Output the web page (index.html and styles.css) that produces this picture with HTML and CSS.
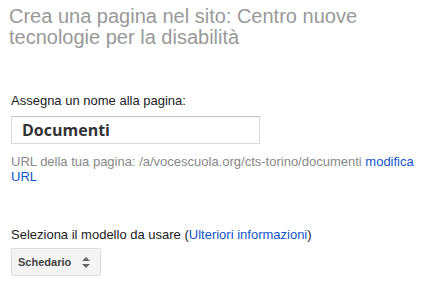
FILE: index.html
```html
<!DOCTYPE html>
<html>
<head>
<meta charset="utf-8">
<link rel="stylesheet" href="styles.css">
</head>
<body>
<div class="page">
  <h1 class="title">Crea una pagina nel sito: Centro nuove tecnologie per la disabilità</h1>
  <div class="field">
    <label class="label">Assegna un nome alla pagina:</label>
    <div class="input">Documenti</div>
    <div class="url">URL della tua pagina: /a/vocescuola.org/cts-torino/documenti <a class="link" href="#">modifica URL</a></div>
  </div>
  <div class="template">
    <div class="label">Seleziona il modello da usare (<a class="link" href="#">Ulteriori informazioni</a>)</div>
    <div class="select">
      <span>Schedario</span>
      <svg class="arrows" width="8" height="11" viewBox="0 0 8 11"><path d="M4 0 L8 4 H0 Z M0 7 H8 L4 11 Z" fill="#666"/></svg>
    </div>
  </div>
</div>
</body>
</html>
```
FILE: styles.css
```css
html, body { margin: 0; padding: 0; background: #fff; }
body { font-family: Arial, "Liberation Sans", sans-serif; }
.page { padding: 6px 11px 0 9px; }
.title {
  margin: 0;
  font-weight: normal;
  font-size: 20px;
  line-height: 21px;
  color: #999;
  width: 400px;
}
.field { margin-top: 45px; padding-left: 2px; }
.label { display: block; font-size: 13px; line-height: 16px; color: #222; }
.input {
  margin-top: 7px;
  width: 237px;
  height: 26px;
  border: 1px solid #d9d9d9;
  border-top-color: #c0c0c0;
  padding: 0 0 0 10px;
  font-family: "Open Sans", sans-serif;
  font-weight: bold;
  font-size: 16px;
  line-height: 26px;
  color: #333;
}
.url { margin-top: 10px; font-size: 13px; line-height: 15px; color: #888; }
.link { color: #15c; text-decoration: none; }
.template { margin-top: 43px; padding-left: 2px; }
.select {
  margin-top: 5px;
  display: inline-flex;
  align-items: center;
  gap: 11px;
  height: 26px;
  padding: 0 10px 0 6px;
  background: #f4f4f4;
  border: 1px solid #dcdcdc;
  border-radius: 2px;
  font-size: 11px;
  font-weight: bold;
  color: #444;
}
.arrows { display: block; }
```
